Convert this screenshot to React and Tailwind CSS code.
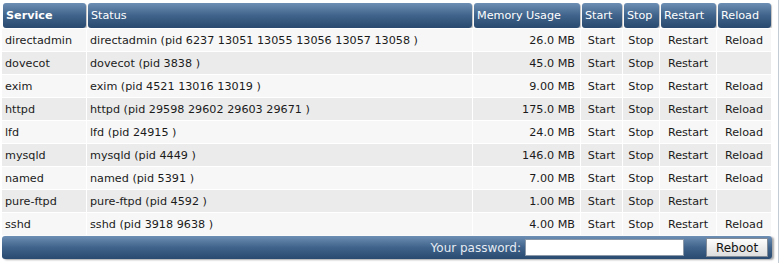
import React from 'react';

const services = [
  { name: 'directadmin', status: 'directadmin (pid 6237 13051 13055 13056 13057 13058 )', mem: '26.0 MB', reload: true },
  { name: 'dovecot', status: 'dovecot (pid 3838 )', mem: '45.0 MB', reload: false },
  { name: 'exim', status: 'exim (pid 4521 13016 13019 )', mem: '9.00 MB', reload: true },
  { name: 'httpd', status: 'httpd (pid 29598 29602 29603 29671 )', mem: '175.0 MB', reload: true },
  { name: 'lfd', status: 'lfd (pid 24915 )', mem: '24.0 MB', reload: true },
  { name: 'mysqld', status: 'mysqld (pid 4449 )', mem: '146.0 MB', reload: true },
  { name: 'named', status: 'named (pid 5391 )', mem: '7.00 MB', reload: true },
  { name: 'pure-ftpd', status: 'pure-ftpd (pid 4592 )', mem: '1.00 MB', reload: false },
  { name: 'sshd', status: 'sshd (pid 3918 9638 )', mem: '4.00 MB', reload: true },
];

const headers = ['Service', 'Status', 'Memory Usage', 'Start', 'Stop', 'Restart', 'Reload'];

function HeadCell({ label, bold }) {
  return (
    <th className="p-0 pt-[1px] px-[1px] text-left font-normal">
      <div
        className={`h-[25px] pt-[2px] rounded-[3px] bg-gradient-to-b from-[#6e8fb4] via-[#3f638b] to-[#2a4a6f] text-white flex items-center pl-[3px] shadow-[1px_1px_1px_rgba(0,0,0,0.25)] ${bold ? 'font-bold' : ''}`}
      >
        {label}
      </div>
    </th>
  );
}

export default function App() {
  return (
    <div className="w-[782px] h-[263px] bg-white overflow-hidden text-[11.2px] text-[#1b1b1b] font-['DejaVu_Sans',Verdana,sans-serif]">
      <div className="w-[779px] h-[263px] border-r border-[#c3cbd4] pl-[2px] pt-[2px]">
        <table className="w-[770px] table-fixed border-separate border-spacing-0">
          <colgroup>
            <col className="w-[85px]" />
            <col className="w-[386px]" />
            <col className="w-[108px]" />
            <col className="w-[42px]" />
            <col className="w-[37px]" />
            <col className="w-[57px]" />
            <col className="w-[55px]" />
          </colgroup>
          <thead>
            <tr>
              {headers.map((h, i) => (
                <HeadCell key={h} label={h} bold={i === 0} />
              ))}
            </tr>
          </thead>
          <tbody>
            {services.map((s, i) => {
              const bg = i % 2 === 0 ? 'bg-[#f7f7f7]' : 'bg-[#ebebeb]';
              const cell = `h-[23px] p-0 pt-[2px] border-t border-r border-white ${bg}`;
              return (
                <tr key={s.name}>
                  <td className={`${cell} pl-[3px]`}>{s.name}</td>
                  <td className={`${cell} pl-[3px]`}>{s.status}</td>
                  <td className={`${cell} text-right pr-[5px]`}>{s.mem}</td>
                  <td className={`${cell} text-center`}>Start</td>
                  <td className={`${cell} text-center`}>Stop</td>
                  <td className={`${cell} text-center`}>Restart</td>
                  <td className={`${cell} text-center`}>{s.reload ? 'Reload' : ''}</td>
                </tr>
              );
            })}
          </tbody>
        </table>
        <div className="mt-[1px] w-[770px] h-[23px] rounded-[3px] bg-gradient-to-b from-[#6e8fb4] via-[#3f638b] to-[#2a4a6f] shadow-[2px_1px_2px_rgba(0,0,0,0.35)] flex items-center justify-end pr-[4px]">
          <span className="text-[#e6ecf3] text-[12px] mr-[4px] pt-[1px]">Your password:</span>
          <input
            type="password"
            className="w-[159px] h-[17px] bg-white border border-[#8a98a8] outline-none"
          />
          <button className="ml-[22px] w-[62px] h-[19px] border border-[#7f8a96] bg-gradient-to-b from-[#fdfdfd] to-[#dedede] text-[#111] text-[12px] leading-none">
            Reboot
          </button>
        </div>
      </div>
    </div>
  );
}
